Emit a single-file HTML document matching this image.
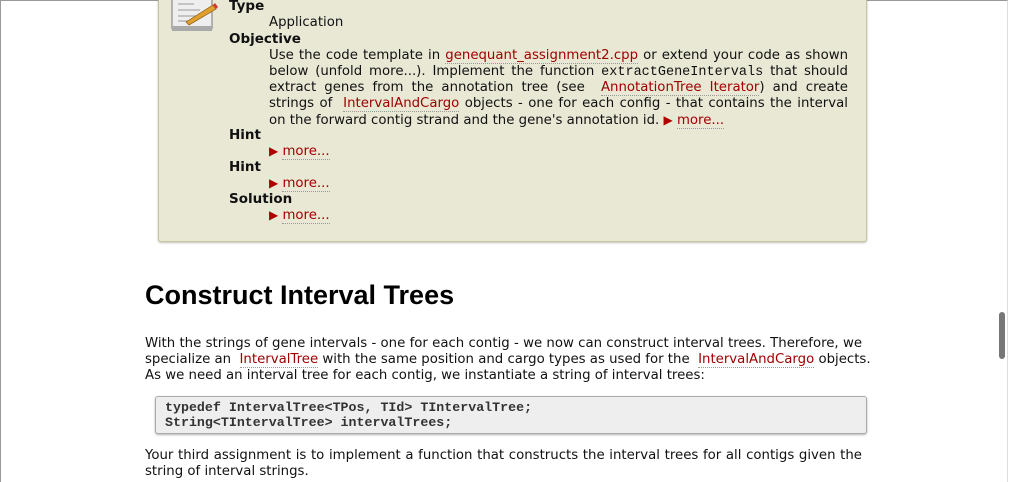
<!DOCTYPE html>
<html><head><style>
body{margin:0;width:1009px;height:481px;overflow:hidden;background:#fff;font-family:"DejaVu Sans",Verdana,sans-serif;font-size:13.3px;color:#111;position:relative}
.frame{position:absolute;left:0;top:0;width:1006px;height:481px;border-left:1px solid #999;border-top:1px solid #999;border-right:1px solid #ddd}
.box{position:absolute;left:158px;top:-10px;width:707px;height:250px;background:#e8e8d5;border:1px solid #c5c59c;border-radius:3px;box-shadow:0 1px 2px rgba(0,0,0,.25)}
.l{position:absolute;white-space:nowrap;line-height:16px}
.b{font-weight:bold;font-size:13.5px}
a{color:#a00000;text-decoration:none;border-bottom:1px dotted #999}
.j{position:absolute;width:579px;text-align:justify;text-align-last:justify;white-space:nowrap;line-height:16px}
.o{left:269px;width:579px}
.q{left:145px;width:717px}
code{font-family:"Liberation Mono",monospace;font-size:13.5px}
.tri{color:#b00000;font-size:12px}
h2{position:absolute;left:145px;top:280px;margin:0;font-family:"Liberation Sans",Arial,sans-serif;font-size:27px;line-height:31px;font-weight:bold;color:#000}
.code{position:absolute;left:155px;top:396px;width:701px;height:33px;background:#eee;border:1px solid #aaa;border-radius:3px;box-shadow:0 1px 2px rgba(0,0,0,.3);padding:3px 0 0 9px;font-family:"Liberation Mono",monospace;font-weight:bold;font-size:13.3px;line-height:15px;color:#333}
.sb{position:absolute;left:999px;top:312px;width:6px;height:47px;background:#777;border-radius:3px}
</style></head><body>
<div class="frame"></div>
<div class="box"></div>
<svg style="position:absolute;left:170px;top:0" width="50" height="34" viewBox="0 0 50 34">
<rect x="2" y="-6" width="40" height="36" rx="2" fill="#eee" stroke="#777"/>
<rect x="2" y="26" width="40" height="5" fill="#aaa"/>
<line x1="8" y1="4" x2="24" y2="4" stroke="#999"/><line x1="8" y1="10" x2="30" y2="10" stroke="#999"/><line x1="8" y1="16" x2="28" y2="16" stroke="#999"/><line x1="8" y1="21" x2="22" y2="21" stroke="#999"/>
<path d="M16 22 L43 5 L46 9 L19 25 Z" fill="#e0a030" stroke="#8a5a10" stroke-width=".7"/>
<path d="M43 5 L46 9 L48 7 L45 3 Z" fill="#d33"/>
</svg>
<div class="l b" style="left:229px;top:-2px">Type</div>
<div class="l" style="left:269px;top:15px">Application</div>
<div class="l b" style="left:229px;top:31px">Objective</div>
<div class="j o" style="top:48px">Use the code template in <a>genequant_assignment2.cpp</a> or extend your code as shown</div>
<div class="j o" style="top:64px">below (unfold more...). Implement the function <code>extractGeneIntervals</code> that should</div>
<div class="j o" style="top:80px">extract genes from the annotation tree (see &nbsp;<a>AnnotationTree Iterator</a>) and create</div>
<div class="j o" style="top:96px">strings of &nbsp;<a>IntervalAndCargo</a> objects - one for each config - that contains the interval</div>
<div class="l" style="left:269px;top:112px">on the forward contig strand and the gene's annotation id. <span class="tri">▶</span> <a>more...</a></div>
<div class="l b" style="left:229px;top:127px">Hint</div>
<div class="l" style="left:269px;top:143px"><span class="tri">▶</span> <a>more...</a></div>
<div class="l b" style="left:229px;top:159px">Hint</div>
<div class="l" style="left:269px;top:175px"><span class="tri">▶</span> <a>more...</a></div>
<div class="l b" style="left:229px;top:191px">Solution</div>
<div class="l" style="left:269px;top:207px"><span class="tri">▶</span> <a>more...</a></div>
<h2>Construct Interval Trees</h2>
<div class="j q" style="top:336px">With the strings of gene intervals - one for each contig - we now can construct interval trees. Therefore, we</div>
<div class="j q" style="top:352px">specialize an &nbsp;<a>IntervalTree</a> with the same position and cargo types as used for the &nbsp;<a>IntervalAndCargo</a> objects.</div>
<div class="l" style="left:145px;top:368px">As we need an interval tree for each contig, we instantiate a string of interval trees:</div>
<div class="code">typedef IntervalTree&lt;TPos, TId&gt; TIntervalTree;<br>String&lt;TIntervalTree&gt; intervalTrees;</div>
<div class="j q" style="top:448px">Your third assignment is to implement a function that constructs the interval trees for all contigs given the</div>
<div class="l" style="left:145px;top:464px">string of interval strings.</div>
<div class="sb"></div>
</body></html>
